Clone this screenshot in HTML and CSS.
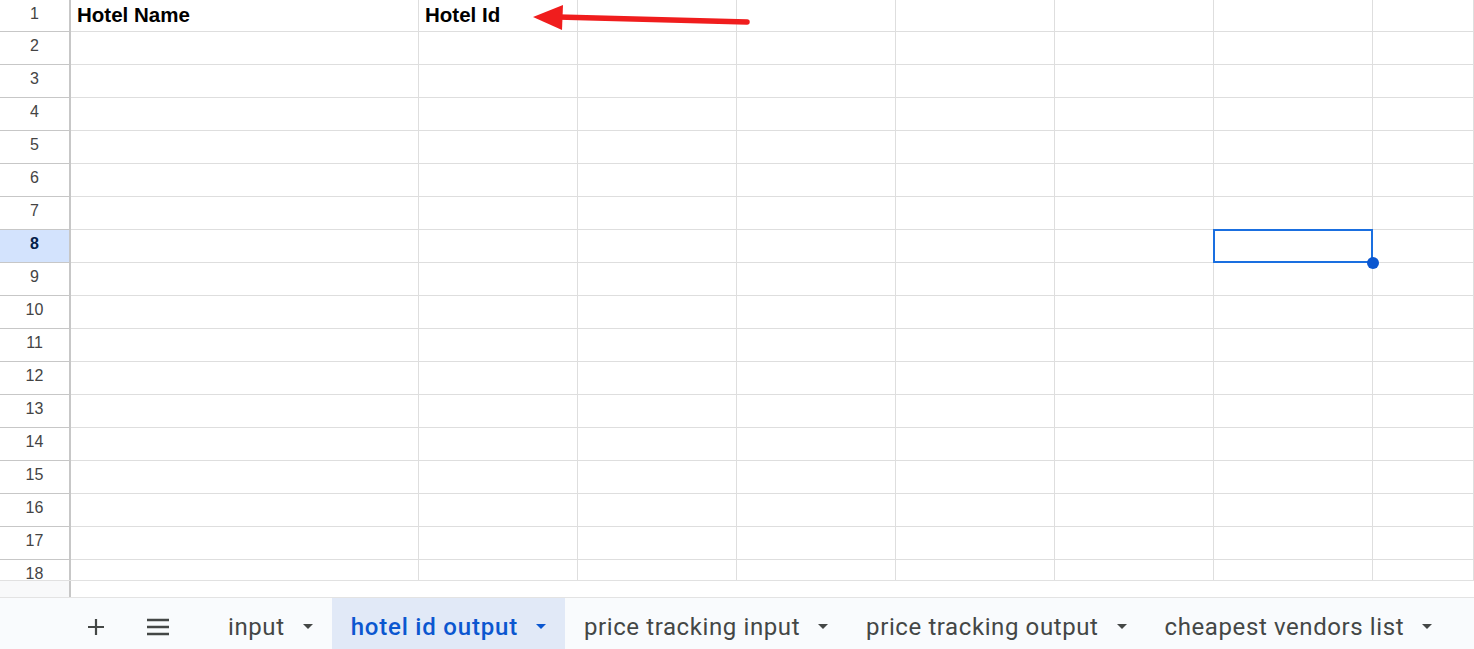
FILE: index.html
```html
<!DOCTYPE html>
<html>
<head>
<meta charset="utf-8">
<link rel="stylesheet" href="styles.css">
</head>
<body>
<div class="sheet">
  <div class="grid">
    <div class="row first"><div class="rh">1</div><div class="c a hd">Hotel Name</div><div class="c hd">Hotel Id</div><div class="c"></div><div class="c"></div><div class="c"></div><div class="c"></div><div class="c"></div><div class="c"></div></div>
    <div class="row"><div class="rh">2</div><div class="c a"></div><div class="c"></div><div class="c"></div><div class="c"></div><div class="c"></div><div class="c"></div><div class="c"></div><div class="c"></div></div>
    <div class="row"><div class="rh">3</div><div class="c a"></div><div class="c"></div><div class="c"></div><div class="c"></div><div class="c"></div><div class="c"></div><div class="c"></div><div class="c"></div></div>
    <div class="row"><div class="rh">4</div><div class="c a"></div><div class="c"></div><div class="c"></div><div class="c"></div><div class="c"></div><div class="c"></div><div class="c"></div><div class="c"></div></div>
    <div class="row"><div class="rh">5</div><div class="c a"></div><div class="c"></div><div class="c"></div><div class="c"></div><div class="c"></div><div class="c"></div><div class="c"></div><div class="c"></div></div>
    <div class="row"><div class="rh">6</div><div class="c a"></div><div class="c"></div><div class="c"></div><div class="c"></div><div class="c"></div><div class="c"></div><div class="c"></div><div class="c"></div></div>
    <div class="row"><div class="rh">7</div><div class="c a"></div><div class="c"></div><div class="c"></div><div class="c"></div><div class="c"></div><div class="c"></div><div class="c"></div><div class="c"></div></div>
    <div class="row"><div class="rh sel">8</div><div class="c a"></div><div class="c"></div><div class="c"></div><div class="c"></div><div class="c"></div><div class="c"></div><div class="c active"></div><div class="c"></div></div>
    <div class="row"><div class="rh">9</div><div class="c a"></div><div class="c"></div><div class="c"></div><div class="c"></div><div class="c"></div><div class="c"></div><div class="c"></div><div class="c"></div></div>
    <div class="row"><div class="rh">10</div><div class="c a"></div><div class="c"></div><div class="c"></div><div class="c"></div><div class="c"></div><div class="c"></div><div class="c"></div><div class="c"></div></div>
    <div class="row"><div class="rh">11</div><div class="c a"></div><div class="c"></div><div class="c"></div><div class="c"></div><div class="c"></div><div class="c"></div><div class="c"></div><div class="c"></div></div>
    <div class="row"><div class="rh">12</div><div class="c a"></div><div class="c"></div><div class="c"></div><div class="c"></div><div class="c"></div><div class="c"></div><div class="c"></div><div class="c"></div></div>
    <div class="row"><div class="rh">13</div><div class="c a"></div><div class="c"></div><div class="c"></div><div class="c"></div><div class="c"></div><div class="c"></div><div class="c"></div><div class="c"></div></div>
    <div class="row"><div class="rh">14</div><div class="c a"></div><div class="c"></div><div class="c"></div><div class="c"></div><div class="c"></div><div class="c"></div><div class="c"></div><div class="c"></div></div>
    <div class="row"><div class="rh">15</div><div class="c a"></div><div class="c"></div><div class="c"></div><div class="c"></div><div class="c"></div><div class="c"></div><div class="c"></div><div class="c"></div></div>
    <div class="row"><div class="rh">16</div><div class="c a"></div><div class="c"></div><div class="c"></div><div class="c"></div><div class="c"></div><div class="c"></div><div class="c"></div><div class="c"></div></div>
    <div class="row"><div class="rh">17</div><div class="c a"></div><div class="c"></div><div class="c"></div><div class="c"></div><div class="c"></div><div class="c"></div><div class="c"></div><div class="c"></div></div>
    <div class="row"><div class="rh">18</div><div class="c a"></div><div class="c"></div><div class="c"></div><div class="c"></div><div class="c"></div><div class="c"></div><div class="c"></div><div class="c"></div></div>
    <svg class="arrow" width="240" height="40" viewBox="0 0 240 40">
      <line x1="28" y1="17" x2="217" y2="22" stroke="#f01d1d" stroke-width="5.5" stroke-linecap="round"/>
      <polygon points="3,17 33,5 32,30" fill="#f01d1d"/>
    </svg>
  </div>
  <div class="strip"><div class="strip-left"></div></div>
  <div class="tabbar">
    <div class="tool plus">
      <svg width="18" height="18" viewBox="0 0 18 18"><path d="M9 1v16M1 9h16" stroke="#444746" stroke-width="2.2"/></svg>
    </div>
    <div class="tool menu">
      <svg width="24" height="18" viewBox="0 0 24 18"><path d="M1 2h22M1 9h22M1 16h22" stroke="#444746" stroke-width="2.6"/></svg>
    </div>
    <div class="tabs">
      <div class="tab"><span>input</span><i class="caret"></i></div>
      <div class="tab on"><span>hotel id output</span><i class="caret"></i></div>
      <div class="tab"><span>price tracking input</span><i class="caret"></i></div>
      <div class="tab"><span>price tracking output</span><i class="caret"></i></div>
      <div class="tab"><span>cheapest vendors list</span><i class="caret"></i></div>
    </div>
  </div>
</div>
</body>
</html>
```
FILE: styles.css
```css
* { box-sizing: border-box; }
html, body { margin: 0; padding: 0; background: #fff; }
.sheet { width: 1474px; height: 649px; overflow: hidden; display: flex; flex-direction: column; font-family: Arial, "Liberation Sans", sans-serif; }
.grid { position: relative; height: 580px; overflow: hidden; flex: none; }
.row { display: grid; grid-template-columns: 71px 348px repeat(6, 159px) 101px; height: 33px; }
.row.first { height: 32px; }
.rh { border-right: 2px solid #c7c7c7; border-bottom: 1px solid #c7c7c7; background: #fff; color: #444; font-size: 16px; display: flex; align-items: center; justify-content: center; padding-bottom: 4px; }
.rh.sel { background: #d3e3fd; color: #041e49; font-weight: bold; }
.c { border-right: 1px solid #dedede; border-bottom: 1px solid #dedede; position: relative; }
.c.hd { font-weight: bold; font-size: 20.5px; color: #000; display: flex; align-items: center; padding-left: 6px; padding-bottom: 1px; }
.c.active::after { content: ""; position: absolute; left: -1px; top: -1px; right: -1px; bottom: -1px; border: 2px solid #1a6fe0; }
.c.active::before { content: ""; position: absolute; right: -7px; bottom: -7px; width: 12px; height: 12px; border-radius: 50%; background: #0b57d0; z-index: 2; }
.arrow { position: absolute; left: 530px; top: 0; }
.strip { height: 18px; border-top: 1px solid #e1e1e1; border-bottom: 1px solid #e3e3e3; display: flex; flex: none; }
.strip-left { width: 71px; background: #f8f9fa; border-right: 2px solid #c7c7c7; }
.tabbar { flex: 1; background: #f9fbfd; display: flex; align-items: stretch; font-family: Roboto, "Noto Sans", sans-serif; }
.tool { display: flex; align-items: center; justify-content: center; padding-top: 6px; }
.plus { width: 38px; margin-left: 77px; }
.menu { width: 38px; margin-left: 24px; }
.tabs { display: flex; margin-left: 32px; }
.tab { display: flex; align-items: center; padding: 8px 19px 0; font-size: 24px; color: #444746; letter-spacing: 0.6px; }
.tab span { margin-top: -1px; }
.tab .caret { width: 0; height: 0; border-left: 5.5px solid transparent; border-right: 5.5px solid transparent; border-top: 5.5px solid #444746; margin-left: 18px; margin-top: -2px; }
.tab.on { background: #e1e9f7; color: #0b57d0; font-weight: 500; letter-spacing: 0.8px; }
.tab.on .caret { border-top-color: #0b57d0; }
```
